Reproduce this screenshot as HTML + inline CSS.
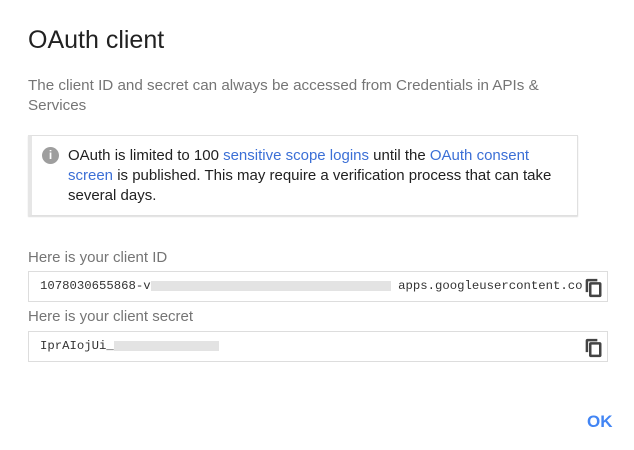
<!DOCTYPE html>
<html><head><style>
body{margin:0;width:634px;height:450px;background:#fff;font-family:"Liberation Sans",sans-serif;position:relative;overflow:hidden}
.a{position:absolute;white-space:nowrap}
.t{left:28px;top:26px;font-size:25px;color:#212121}
.d{left:28px;top:76px;font-size:15.2px;color:#757575;line-height:20px}
.box{position:absolute;left:28px;top:135px;width:545px;height:79px;border:1px solid #e0e0e0;border-left:4px solid #e6e6e6;box-shadow:0 1px 1px #ddd}
.ic{position:absolute;left:10px;top:11px;width:17px;height:17px;border-radius:50%;background:#9e9e9e;color:#fff;font-size:12px;font-weight:bold;text-align:center;line-height:17px}
.bt{position:absolute;left:36px;top:10px;font-size:15px;color:#212121;line-height:20px;width:500px}
a{color:#3b6fd6;text-decoration:none}
.l{left:28px;font-size:15px;color:#757575}
.in{position:absolute;left:28px;width:578px;height:29px;border:1px solid #ddd;overflow:hidden}
.in span{position:absolute;left:11px;top:7px;font-family:"Liberation Mono",monospace;font-size:12.3px;color:#333;white-space:nowrap}
.blur{display:inline-block;height:10px;background:#e3e3e3;vertical-align:middle}
.cp{position:absolute;right:3px;top:6px}
.ok{left:587px;top:412px;font-size:17px;font-weight:bold;color:#4285f4}
</style></head><body>
<div class="a t">OAuth client</div>
<div class="a d">The client ID and secret can always be accessed from Credentials in APIs &amp;<br>Services</div>
<div class="box"><div class="ic">i</div><div class="bt">OAuth is limited to 100 <a>sensitive scope logins</a> until the <a>OAuth consent</a> <a>screen</a> is published. This may require a verification process that can take several days.</div></div>
<div class="a l" style="top:249px">Here is your client ID</div>
<div class="in" style="top:271px"><span>1078030655868-v<i class="blur" style="width:240px"></i> apps.googleusercontent.co</span>
<svg class="cp" width="20" height="20" viewBox="0 0 24 24"><rect x="0" y="0" width="24" height="24" fill="#fff"/><path d="M16 1H4c-1.1 0-2 .9-2 2v14h3V4h11V1zm3 4H8c-1.1 0-2 .9-2 2v14c0 1.1.9 2 2 2h11c1.1 0 2-.9 2-2V7c0-1.1-.9-2-2-2zm-1 15H9V8h9v12z" fill="#444"/></svg></div>
<div class="a l" style="top:308px">Here is your client secret</div>
<div class="in" style="top:331px"><span>IprAIojUi_<i class="blur" style="width:105px"></i></span>
<svg class="cp" width="20" height="20" viewBox="0 0 24 24"><path d="M16 1H4c-1.1 0-2 .9-2 2v14h3V4h11V1zm3 4H8c-1.1 0-2 .9-2 2v14c0 1.1.9 2 2 2h11c1.1 0 2-.9 2-2V7c0-1.1-.9-2-2-2zm-1 15H9V8h9v12z" fill="#444"/></svg></div>
<div class="a ok">OK</div>
</body></html>
